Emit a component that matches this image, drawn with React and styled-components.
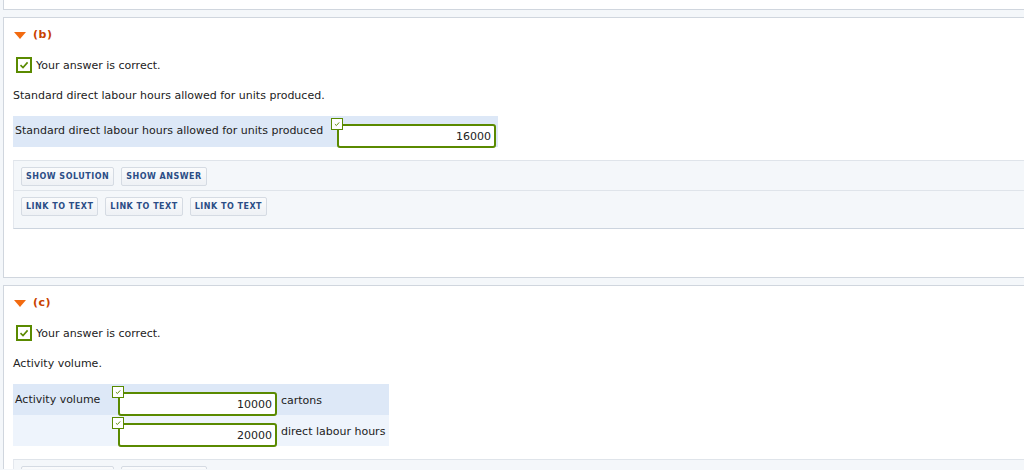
import React from "react";
import styled, { createGlobalStyle } from "styled-components";

const GlobalStyle = createGlobalStyle`
	body {
		margin: 0;
		background: #f4f7fa;
		font-family: "DejaVu Sans", Verdana, sans-serif;
		font-size: 11px;
		color: #222;
	}
`;

const Page = styled.div`
	width: 1024px;
	height: 470px;
	overflow: hidden;
	display: flex;
	flex-direction: column;
	gap: 7px;
	margin-top: -1px;
`;

const Card = styled.div`
	margin-left: 3px;
	background: #fff;
	border: 1px solid #d0d6de;
	border-right: none;
	height: ${p => p.h}px;
	flex-shrink: 0;
	box-sizing: border-box;
	padding: 0 0 0 9px;
`;

const PartTitle = styled.div`
	display: flex;
	align-items: center;
	gap: 7px;
	margin-top: 9px;
	height: 14px;
	padding-left: 1px;
	color: #c94100;
	font-weight: bold;
	font-size: 11px;
	letter-spacing: 0.5px;
`;

const Triangle = styled.span`
	width: 0;
	height: 0;
	border-left: 6px solid transparent;
	border-right: 6px solid transparent;
	border-top: 7px solid #f26a10;
	margin-top: 2px;
`;

const Correct = styled.div`
	display: flex;
	align-items: center;
	gap: 4px;
	margin: 16px 0 0 3px;
	height: 16px;
`;

const CheckBox = styled.span`
	display: inline-flex;
	align-items: center;
	justify-content: center;
	width: ${p => p.size}px;
	height: ${p => p.size}px;
	box-sizing: border-box;
	border: ${p => (p.size > 12 ? 2 : 1)}px solid #5a8a00;
	background: #fff;
	flex-shrink: 0;
`;

const Check = ({ size }) => (
	<CheckBox size={size}>
		<svg width={size - 6} height={size - 6} viewBox="0 0 10 10">
			<path d="M1.5 5.2 L4 7.6 L8.6 2.4" fill="none" stroke="#5a8a00" strokeWidth="1.6" />
		</svg>
	</CheckBox>
);

const Question = styled.div`
	margin: 16px 0 0 0;
	height: 14px;
	line-height: 14px;
`;

const Table = styled.div`
	display: inline-flex;
	flex-direction: column;
	margin-top: ${p => p.top}px;
`;

const Row = styled.div`
	display: flex;
	align-items: flex-start;
	height: 31px;
	background: ${p => (p.alt ? "#eef4fc" : "#dde8f7")};
	padding-right: ${p => p.pr}px;
`;

const Label = styled.div`
	width: ${p => p.w}px;
	padding-left: 2px;
	padding-top: ${p => p.pt}px;
	line-height: 14px;
	flex-shrink: 0;
	white-space: nowrap;
`;

const Field = styled.div`
	position: relative;
	padding: 1px 0 0 6px;
	display: flex;
	align-items: flex-start;
`;

const FieldCheck = styled.div`
	position: absolute;
	left: 0;
	top: 1px;
`;

const Input = styled.div`
	margin-top: 7px;
	width: 159px;
	height: 24px;
	box-sizing: border-box;
	border: 2px solid #5a8a00;
	border-radius: 3px;
	background: #fff;
	text-align: right;
	padding: 3px 3px 0 0;
	line-height: 15px;
	color: #222;
`;

const Unit = styled.div`
	padding: 10px 0 0 4px;
	line-height: 14px;
	white-space: nowrap;
`;

const Panel = styled.div`
	margin-top: ${p => p.top}px;
	background: #f4f7fa;
	border-top: 1px solid #dfe4ea;
	border-bottom: 1px solid #ccd4de;
	border-left: 1px solid #e4e8ee;
`;

const ButtonRow = styled.div`
	display: flex;
	gap: 7px;
	padding: 6px 0 4px 7px;
	height: 19px;
	& + & {
		border-top: 1px solid #dfe4ea;
		padding-bottom: 12px;
	}
`;

const Button = styled.div`
	height: 19px;
	box-sizing: border-box;
	border: 1px solid #d5dbe3;
	border-radius: 2px;
	background: linear-gradient(#fafbfc, #eef1f5);
	padding: 0 4px;
	display: flex;
	align-items: center;
	font-size: 8px;
	font-weight: bold;
	letter-spacing: 0.5px;
	color: #2b4d86;
	white-space: nowrap;
`;

const Buttons = ({ top }) => (
	<Panel top={top}>
		<ButtonRow>
			<Button>SHOW SOLUTION</Button>
			<Button>SHOW ANSWER</Button>
		</ButtonRow>
		<ButtonRow>
			<Button>LINK TO TEXT</Button>
			<Button>LINK TO TEXT</Button>
			<Button>LINK TO TEXT</Button>
		</ButtonRow>
	</Panel>
);

const Part = ({ letter }) => (
	<>
		<PartTitle>
			<Triangle />({letter})
		</PartTitle>
		<Correct>
			<Check size={16} />
			Your answer is correct.
		</Correct>
	</>
);

const App = () => (
	<Page>
		<GlobalStyle />
		<Card h={11} />
		<Card h={261}>
			<Part letter="b" />
			<Question>Standard direct labour hours allowed for units produced.</Question>
			<Table top={13}>
				<Row pr={2}>
					<Label w={316} pt={8}>Standard direct labour hours allowed for units produced</Label>
					<Field>
						<FieldCheck>
							<Check size={12} />
						</FieldCheck>
						<Input>16000</Input>
					</Field>
				</Row>
			</Table>
			<Buttons top={13} />
		</Card>
		<Card h={200}>
			<Part letter="c" />
			<Question>Activity volume.</Question>
			<Table top={13}>
				<Row pr={4}>
					<Label w={97} pt={9}>Activity volume</Label>
					<Field>
						<FieldCheck>
							<Check size={12} />
						</FieldCheck>
						<Input>10000</Input>
					</Field>
					<Unit>cartons</Unit>
				</Row>
				<Row alt pr={4}>
					<Label w={97} pt={9} />
					<Field>
						<FieldCheck>
							<Check size={12} />
						</FieldCheck>
						<Input>20000</Input>
					</Field>
					<Unit>direct labour hours</Unit>
				</Row>
			</Table>
			<Buttons top={13} />
		</Card>
	</Page>
);

export default App;
